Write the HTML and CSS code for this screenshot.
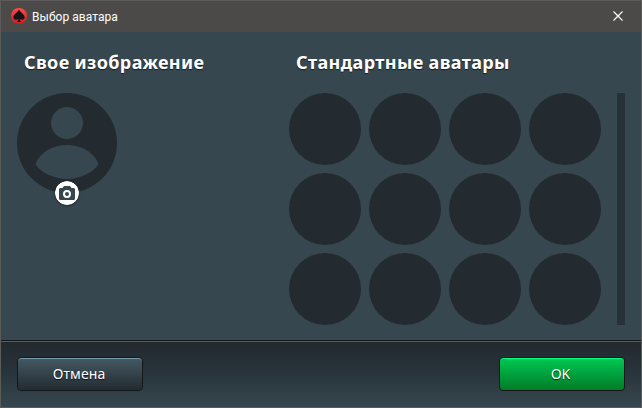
FILE: index.html
```html
<!DOCTYPE html>
<html lang="ru">
<head>
<meta charset="utf-8">
<title>Выбор аватара</title>
<link rel="stylesheet" href="styles.css">
</head>
<body>
<div class="dialog">
  <header class="titlebar">
    <svg class="logo" viewBox="0 0 16 16" width="16" height="16">
      <defs><linearGradient id="red" x1="0" y1="0" x2="0" y2="1"><stop offset="0" stop-color="#ff4a45"/><stop offset="1" stop-color="#d01a20"/></linearGradient></defs>
      <circle cx="8" cy="8" r="8" fill="url(#red)"/>
      <path d="M8 1.800C7 4.100 2.300 6.500 2.300 9.200c0 2.600 3.200 3.200 4.900 1.500 0 1.700-.7 2.600-1.700 3.400h5c-1-.8-1.700-1.700-1.700-3.400 1.700 1.700 4.900 1.100 4.900-1.500C13.700 6.500 9 4.100 8 1.800Z" fill="#141414"/>
    </svg>
    <span class="title">Выбор аватара</span>
    <svg class="close" viewBox="0 0 10 10" width="10" height="10"><path d="M.5.5l9 9M9.500.5l-9 9" stroke="#fff" stroke-width="1.200"/></svg>
  </header>
  <main class="content">
    <section class="own">
      <h2>Свое изображение</h2>
      <div class="portrait">
        <svg viewBox="0 0 100 100" width="100" height="100">
          <circle cx="50" cy="50" r="50" fill="#232a30"/>
          <circle cx="50" cy="30" r="16" fill="#37474f"/>
          <path d="M19 70C24 58 37 52 50 52s26 6 31 18c.5 1.200.3 1.800-.3 2.600C75 80 63 86 50 86s-25-6-30.700-13.400c-.6-.8-.8-1.400-.3-2.600Z" fill="#37474f"/>
        </svg>
        <svg class="camera" viewBox="0 0 24 24" width="24" height="24">
          <circle cx="12" cy="12" r="12" fill="#fff"/>
          <path fill="#37474f" d="M9 5h6l1.500 2H18.500A1.500 1.500 0 0 1 20 8.500v9a1.500 1.500 0 0 1-1.500 1.500h-13A1.500 1.500 0 0 1 4 17.500v-9A1.500 1.500 0 0 1 5.500 7h2Z"/>
          <circle cx="12" cy="13" r="3" fill="none" stroke="#fff" stroke-width="2"/>
        </svg>
      </div>
    </section>
    <section class="standard">
      <h2>Стандартные аватары</h2>
      <div class="gallery">
        <div class="avatars">
          <i></i><i></i><i></i><i></i>
          <i></i><i></i><i></i><i></i>
          <i></i><i></i><i></i><i></i>
        </div>
        <div class="track"></div>
      </div>
    </section>
  </main>
  <footer class="actions">
    <button class="btn cancel">Отмена</button>
    <button class="btn ok">OK</button>
  </footer>
</div>
</body>
</html>
```
FILE: styles.css
```css
* { box-sizing: border-box; }
body { margin: 0; font-family: "Noto Sans", sans-serif; color: #fff; }
.dialog {
  width: 642px; height: 408px;
  display: flex; flex-direction: column;
  border: 1px solid #5c5b59;
  background: #37474f;
  overflow: hidden;
}
.titlebar {
  flex: none; height: 31px;
  display: flex; align-items: center;
  padding: 0 18px 1px 10px;
  background: #4b4a48;
}
.logo { display: block; }
.title { font: 12px/16px Roboto, sans-serif; letter-spacing: .05px; margin: 2px 0 0 5px; }
.close { margin-left: auto; }
.content { flex: none; height: 309px; display: flex; padding: 17px 16px 0; }
.own { width: 272px; }
h2 {
  margin: 0 0 18px 7px;
  font-size: 18px; line-height: 26px; font-weight: 700;
  letter-spacing: .37px;
  white-space: nowrap;
  text-shadow: 0 1px 1px rgba(0, 0, 0, .6);
}
.portrait { position: relative; width: 100px; height: 100px; }
.portrait svg { display: block; }
.portrait .camera {
  position: absolute; left: 38px; top: 88px;
  border-radius: 50%;
  box-shadow: 0 1px 2px rgba(0, 0, 0, .45);
}
.gallery { display: flex; gap: 16px; }
.avatars { display: grid; grid-template-columns: repeat(4, 72px); grid-auto-rows: 72px; gap: 8px; }
.avatars i { border-radius: 50%; background: #232a30; }
.track { width: 8px; height: 232px; background: #263238; }
.actions {
  flex: 1;
  display: flex; justify-content: space-between; align-items: flex-start;
  padding: 15px 16px 0;
  border-top: 1px solid #4c5e68;
  box-shadow: 0 -1px 0 #14181b;
  background: linear-gradient(#232a30, #263238 40%, #37474f);
}
.btn {
  width: 126px; height: 34px; padding: 0 2px 0 0;
  border: 1px solid #14181b; border-radius: 4px;
  font: 14px/32px "Noto Sans", sans-serif; color: #fff;
  text-shadow: 0 1px 1px rgba(0, 0, 0, .7);
}
.cancel { letter-spacing: .1px; background: linear-gradient(#455a64, #232b31); box-shadow: inset 0 1px 0 #78a0b0; }
.ok { padding-right: 3px; background: linear-gradient(#00c853, #007c28); box-shadow: inset 0 1px 0 #00ff88; }
```
